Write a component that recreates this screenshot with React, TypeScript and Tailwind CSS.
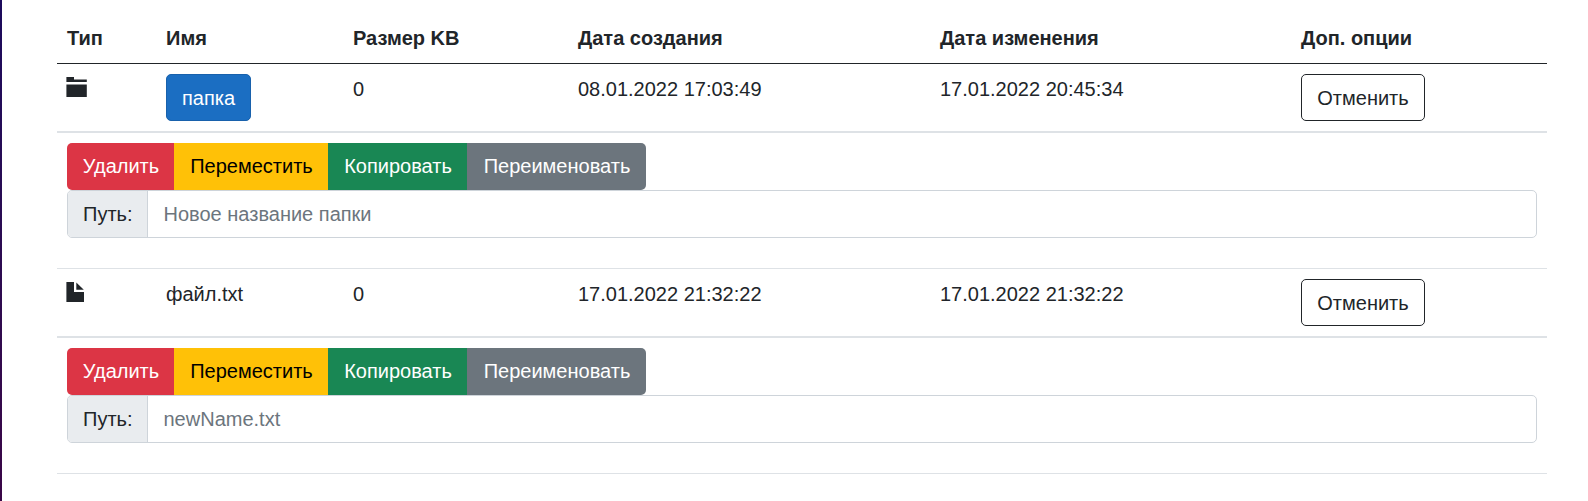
import React from "react";

type Entry = {
  kind: "folder" | "file";
  name: string;
  size: number;
  created: string;
  modified: string;
  placeholder: string;
};

const entries: Entry[] = [
  {
    kind: "folder",
    name: "папка",
    size: 0,
    created: "08.01.2022 17:03:49",
    modified: "17.01.2022 20:45:34",
    placeholder: "Новое название папки",
  },
  {
    kind: "file",
    name: "файл.txt",
    size: 0,
    created: "17.01.2022 21:32:22",
    modified: "17.01.2022 21:32:22",
    placeholder: "newName.txt",
  },
];

const columns =
  "grid grid-cols-[99px_187px_225px_362px_361px_256px] [&>*]:px-[10px]";

function FolderIcon() {
  return (
    <svg className="mt-[3px] -ml-px block" width="21" height="20" viewBox="0 0 21 20" fill="#212529">
      <path d="M.4 0H8v2.5h12.8V5H.4z" />
      <path d="M.4 7.5h20.4V20H.4z" />
    </svg>
  );
}

function FileIcon() {
  return (
    <svg className="mt-[3px] -ml-px block" width="18" height="20" viewBox="0 0 18 20" fill="#212529">
      <path d="M.4 0H8v10h10v10H.4z" />
      <path d="M10.3 0.5l7.5 7.3h-7.5z" />
    </svg>
  );
}

function EntryRows({ entry }: { entry: Entry }) {
  return (
    <>
      <div className={`${columns} border-b-2 border-[#dee2e6] py-[10px]`}>
        <div>{entry.kind === "folder" ? <FolderIcon /> : <FileIcon />}</div>
        <div>
          {entry.kind === "folder" ? (
            <button className="flex h-[47px] w-[85px] items-center justify-center rounded-[5px] border border-[#1861ac] bg-[#1b6ec2] text-white">
              {entry.name}
            </button>
          ) : (
            entry.name
          )}
        </div>
        <div>{entry.size}</div>
        <div>{entry.created}</div>
        <div>{entry.modified}</div>
        <div>
          <button className="flex h-[47px] w-[124px] items-center justify-center rounded-[5px] border border-[#212529]">
            Отменить
          </button>
        </div>
      </div>
      <div className="border-b border-[#dee2e6] px-[10px] pt-[10px] pb-[30px]">
        <div className="flex h-[47px] w-[579px] overflow-hidden rounded-[5px] text-white [&>button]:pb-[2px] [&>button]:pl-px">
          <button className="w-[107px] bg-[#dc3545]">Удалить</button>
          <button className="w-[154px] bg-[#ffc107] text-black">Переместить</button>
          <button className="w-[139px] bg-[#198754]">Копировать</button>
          <button className="w-[179px] bg-[#6c757d]">Переименовать</button>
        </div>
        <div className="flex h-[48px] overflow-hidden rounded-[5px] border border-[#ced4da]">
          <span className="flex w-[80px] items-center border-r border-[#ced4da] bg-[#e9ecef] pl-[15px]">
            Путь:
          </span>
          <input
            className="min-w-0 flex-1 px-[15.5px] outline-none placeholder:text-[#6c757d] placeholder:opacity-100"
            placeholder={entry.placeholder}
          />
        </div>
      </div>
    </>
  );
}

export default function App() {
  return (
    <div className="flex h-[501px] overflow-hidden bg-white font-['Liberation_Sans',Arial,sans-serif] text-[20px] leading-[30px] text-[#212529]">
      <aside className="w-[2px] shrink-0 bg-linear-to-b from-[#1c0a5c] to-[#3a0647]" />
      <main className="ml-[55px] w-[1490px] shrink-0 pt-[13px]">
        <div className={`${columns} border-b border-[#212529] py-[10px] font-bold`}>
          <div>Тип</div>
          <div>Имя</div>
          <div>Размер KB</div>
          <div>Дата создания</div>
          <div>Дата изменения</div>
          <div>Доп. опции</div>
        </div>
        {entries.map((entry) => (
          <EntryRows key={entry.name} entry={entry} />
        ))}
      </main>
    </div>
  );
}
